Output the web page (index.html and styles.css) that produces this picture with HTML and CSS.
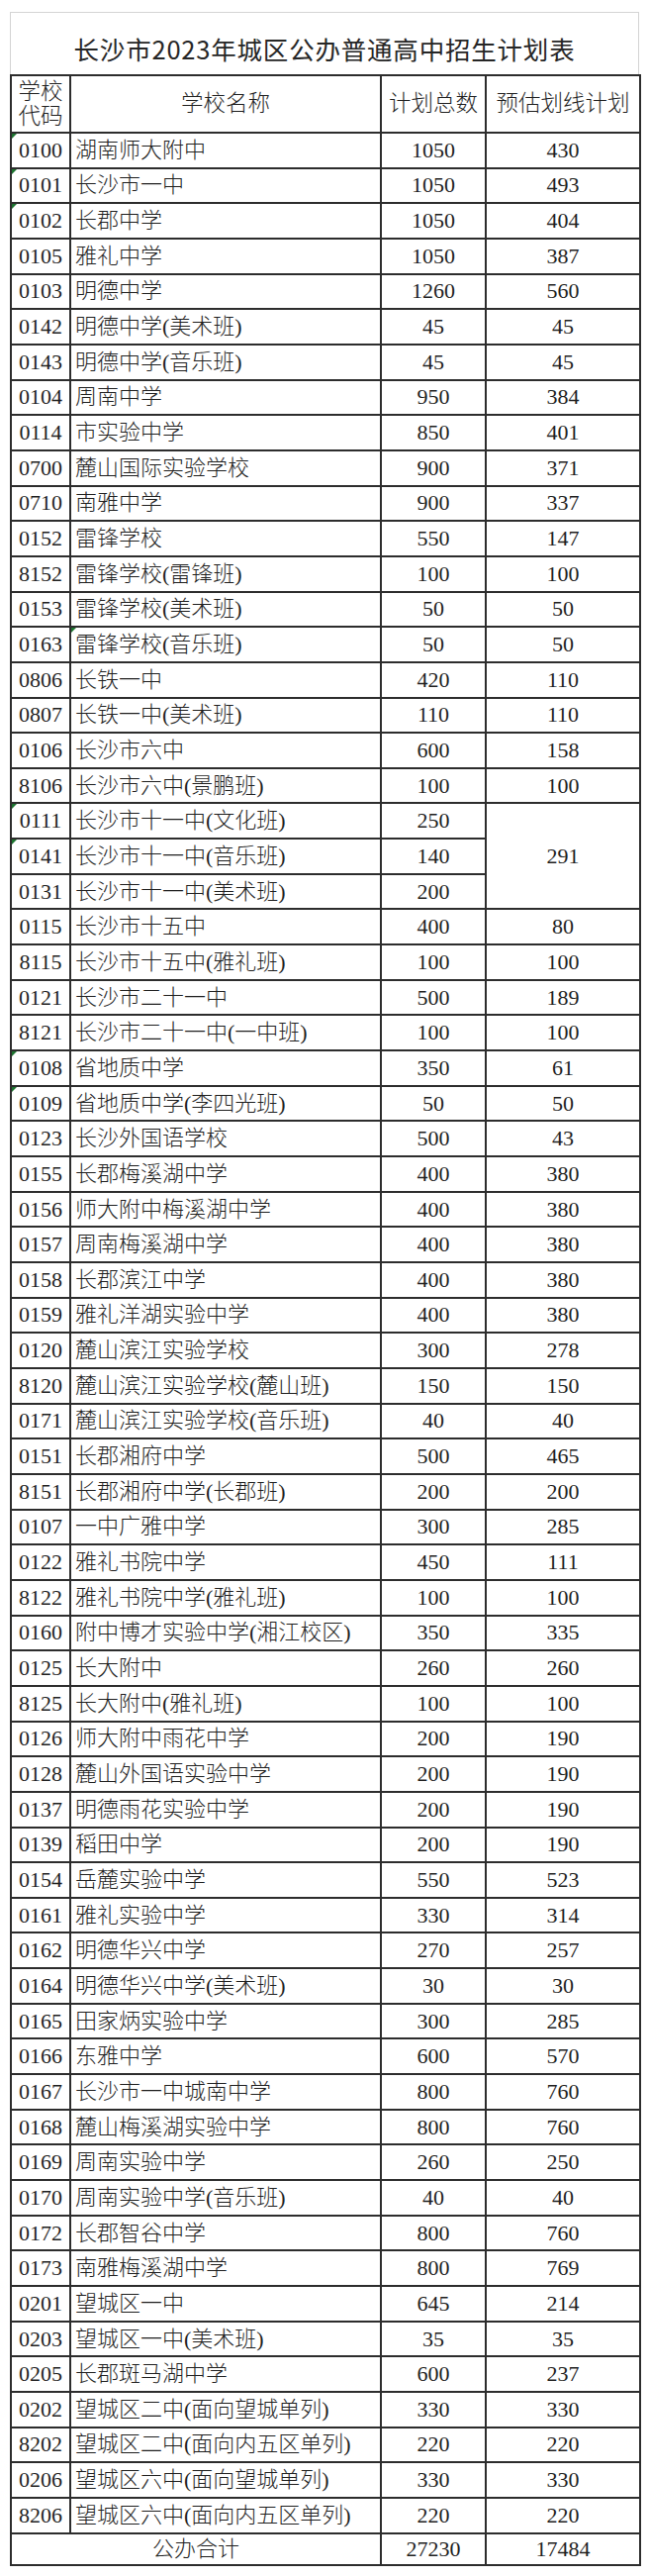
FILE: index.html
```html
<!DOCTYPE html>
<html lang="zh-CN">
<head>
<meta charset="utf-8">
<title>长沙市2023年城区公办普通高中招生计划表</title>
<link rel="stylesheet" href="styles.css">
</head>
<body>
<div class="sheet">
  <div class="title">长沙市2023年城区公办普通高中招生计划表</div>
  <table class="plan">
    <colgroup>
      <col class="c-code"><col class="c-name"><col class="c-total"><col class="c-est">
    </colgroup>
    <thead>
      <tr class="head">
        <th class="code-h">学校<br>代码</th>
        <th>学校名称</th>
        <th>计划总数</th>
        <th>预估划线计划</th>
      </tr>
    </thead>
    <tbody>
      <tr><td class="code mk">0100</td><td class="name">湖南师大附中</td><td class="num">1050</td><td class="num">430</td></tr>
      <tr><td class="code mk">0101</td><td class="name">长沙市一中</td><td class="num">1050</td><td class="num">493</td></tr>
      <tr><td class="code mk">0102</td><td class="name">长郡中学</td><td class="num">1050</td><td class="num">404</td></tr>
      <tr><td class="code">0105</td><td class="name">雅礼中学</td><td class="num">1050</td><td class="num">387</td></tr>
      <tr><td class="code">0103</td><td class="name">明德中学</td><td class="num">1260</td><td class="num">560</td></tr>
      <tr><td class="code">0142</td><td class="name">明德中学(美术班)</td><td class="num">45</td><td class="num">45</td></tr>
      <tr><td class="code">0143</td><td class="name">明德中学(音乐班)</td><td class="num">45</td><td class="num">45</td></tr>
      <tr><td class="code">0104</td><td class="name">周南中学</td><td class="num">950</td><td class="num">384</td></tr>
      <tr><td class="code">0114</td><td class="name">市实验中学</td><td class="num">850</td><td class="num">401</td></tr>
      <tr><td class="code">0700</td><td class="name">麓山国际实验学校</td><td class="num">900</td><td class="num">371</td></tr>
      <tr><td class="code">0710</td><td class="name">南雅中学</td><td class="num">900</td><td class="num">337</td></tr>
      <tr><td class="code">0152</td><td class="name">雷锋学校</td><td class="num">550</td><td class="num">147</td></tr>
      <tr><td class="code">8152</td><td class="name">雷锋学校(雷锋班)</td><td class="num">100</td><td class="num">100</td></tr>
      <tr><td class="code">0153</td><td class="name">雷锋学校(美术班)</td><td class="num">50</td><td class="num">50</td></tr>
      <tr><td class="code">0163</td><td class="name mk">雷锋学校(音乐班)</td><td class="num">50</td><td class="num">50</td></tr>
      <tr><td class="code">0806</td><td class="name">长铁一中</td><td class="num">420</td><td class="num">110</td></tr>
      <tr><td class="code">0807</td><td class="name">长铁一中(美术班)</td><td class="num">110</td><td class="num">110</td></tr>
      <tr><td class="code">0106</td><td class="name">长沙市六中</td><td class="num">600</td><td class="num">158</td></tr>
      <tr><td class="code">8106</td><td class="name">长沙市六中(景鹏班)</td><td class="num">100</td><td class="num">100</td></tr>
      <tr><td class="code mk">0111</td><td class="name">长沙市十一中(文化班)</td><td class="num">250</td><td class="num" rowspan="3">291</td></tr>
      <tr><td class="code mk">0141</td><td class="name">长沙市十一中(音乐班)</td><td class="num">140</td></tr>
      <tr><td class="code">0131</td><td class="name">长沙市十一中(美术班)</td><td class="num">200</td></tr>
      <tr><td class="code">0115</td><td class="name">长沙市十五中</td><td class="num">400</td><td class="num">80</td></tr>
      <tr><td class="code">8115</td><td class="name">长沙市十五中(雅礼班)</td><td class="num">100</td><td class="num">100</td></tr>
      <tr><td class="code">0121</td><td class="name">长沙市二十一中</td><td class="num">500</td><td class="num">189</td></tr>
      <tr><td class="code">8121</td><td class="name">长沙市二十一中(一中班)</td><td class="num">100</td><td class="num">100</td></tr>
      <tr><td class="code mk">0108</td><td class="name">省地质中学</td><td class="num">350</td><td class="num">61</td></tr>
      <tr><td class="code mk">0109</td><td class="name">省地质中学(李四光班)</td><td class="num">50</td><td class="num">50</td></tr>
      <tr><td class="code">0123</td><td class="name">长沙外国语学校</td><td class="num">500</td><td class="num">43</td></tr>
      <tr><td class="code">0155</td><td class="name">长郡梅溪湖中学</td><td class="num">400</td><td class="num">380</td></tr>
      <tr><td class="code">0156</td><td class="name">师大附中梅溪湖中学</td><td class="num">400</td><td class="num">380</td></tr>
      <tr><td class="code">0157</td><td class="name">周南梅溪湖中学</td><td class="num">400</td><td class="num">380</td></tr>
      <tr><td class="code">0158</td><td class="name">长郡滨江中学</td><td class="num">400</td><td class="num">380</td></tr>
      <tr><td class="code">0159</td><td class="name">雅礼洋湖实验中学</td><td class="num">400</td><td class="num">380</td></tr>
      <tr><td class="code">0120</td><td class="name">麓山滨江实验学校</td><td class="num">300</td><td class="num">278</td></tr>
      <tr><td class="code">8120</td><td class="name">麓山滨江实验学校(麓山班)</td><td class="num">150</td><td class="num">150</td></tr>
      <tr><td class="code">0171</td><td class="name">麓山滨江实验学校(音乐班)</td><td class="num">40</td><td class="num">40</td></tr>
      <tr><td class="code">0151</td><td class="name">长郡湘府中学</td><td class="num">500</td><td class="num">465</td></tr>
      <tr><td class="code">8151</td><td class="name">长郡湘府中学(长郡班)</td><td class="num">200</td><td class="num">200</td></tr>
      <tr><td class="code">0107</td><td class="name">一中广雅中学</td><td class="num">300</td><td class="num">285</td></tr>
      <tr><td class="code">0122</td><td class="name">雅礼书院中学</td><td class="num">450</td><td class="num">111</td></tr>
      <tr><td class="code">8122</td><td class="name">雅礼书院中学(雅礼班)</td><td class="num">100</td><td class="num">100</td></tr>
      <tr><td class="code">0160</td><td class="name">附中博才实验中学(湘江校区)</td><td class="num">350</td><td class="num">335</td></tr>
      <tr><td class="code">0125</td><td class="name">长大附中</td><td class="num">260</td><td class="num">260</td></tr>
      <tr><td class="code">8125</td><td class="name">长大附中(雅礼班)</td><td class="num">100</td><td class="num">100</td></tr>
      <tr><td class="code">0126</td><td class="name">师大附中雨花中学</td><td class="num">200</td><td class="num">190</td></tr>
      <tr><td class="code">0128</td><td class="name">麓山外国语实验中学</td><td class="num">200</td><td class="num">190</td></tr>
      <tr><td class="code">0137</td><td class="name">明德雨花实验中学</td><td class="num">200</td><td class="num">190</td></tr>
      <tr><td class="code">0139</td><td class="name">稻田中学</td><td class="num">200</td><td class="num">190</td></tr>
      <tr><td class="code">0154</td><td class="name">岳麓实验中学</td><td class="num">550</td><td class="num">523</td></tr>
      <tr><td class="code">0161</td><td class="name">雅礼实验中学</td><td class="num">330</td><td class="num">314</td></tr>
      <tr><td class="code">0162</td><td class="name">明德华兴中学</td><td class="num">270</td><td class="num">257</td></tr>
      <tr><td class="code">0164</td><td class="name">明德华兴中学(美术班)</td><td class="num">30</td><td class="num">30</td></tr>
      <tr><td class="code">0165</td><td class="name">田家炳实验中学</td><td class="num">300</td><td class="num">285</td></tr>
      <tr><td class="code">0166</td><td class="name">东雅中学</td><td class="num">600</td><td class="num">570</td></tr>
      <tr><td class="code">0167</td><td class="name">长沙市一中城南中学</td><td class="num">800</td><td class="num">760</td></tr>
      <tr><td class="code">0168</td><td class="name">麓山梅溪湖实验中学</td><td class="num">800</td><td class="num">760</td></tr>
      <tr><td class="code">0169</td><td class="name">周南实验中学</td><td class="num">260</td><td class="num">250</td></tr>
      <tr><td class="code">0170</td><td class="name">周南实验中学(音乐班)</td><td class="num">40</td><td class="num">40</td></tr>
      <tr><td class="code">0172</td><td class="name">长郡智谷中学</td><td class="num">800</td><td class="num">760</td></tr>
      <tr><td class="code">0173</td><td class="name">南雅梅溪湖中学</td><td class="num">800</td><td class="num">769</td></tr>
      <tr><td class="code">0201</td><td class="name">望城区一中</td><td class="num">645</td><td class="num">214</td></tr>
      <tr><td class="code">0203</td><td class="name">望城区一中(美术班)</td><td class="num">35</td><td class="num">35</td></tr>
      <tr><td class="code">0205</td><td class="name">长郡斑马湖中学</td><td class="num">600</td><td class="num">237</td></tr>
      <tr><td class="code">0202</td><td class="name">望城区二中(面向望城单列)</td><td class="num">330</td><td class="num">330</td></tr>
      <tr><td class="code">8202</td><td class="name">望城区二中(面向内五区单列)</td><td class="num">220</td><td class="num">220</td></tr>
      <tr><td class="code">0206</td><td class="name">望城区六中(面向望城单列)</td><td class="num">330</td><td class="num">330</td></tr>
      <tr><td class="code">8206</td><td class="name">望城区六中(面向内五区单列)</td><td class="num">220</td><td class="num">220</td></tr>
    </tbody>
    <tfoot>
      <tr class="sum"><td colspan="2" class="sum-label">公办合计</td><td class="num">27230</td><td class="num">17484</td></tr>
    </tfoot>
  </table>
</div>
</body>
</html>
```

FILE: styles.css
```css
html, body {
  margin: 0;
  padding: 0;
  background: #ffffff;
}

.sheet {
  width: 636px;
  margin: 12px 0 0 10px;
}

.title {
  height: 63px;
  border: 1px solid #d4d4d4;
  border-bottom: none;
  box-sizing: border-box;
  display: flex;
  align-items: center;
  justify-content: center;
  padding-top: 8px;
  font-family: "Noto Sans CJK SC", sans-serif;
  font-size: 25.5px;
  font-weight: 400;
  letter-spacing: 0.8px;
  color: #262626;
}

.plan {
  width: 636px;
  border-collapse: collapse;
  table-layout: fixed;
  font-family: "Liberation Serif", "Noto Sans CJK SC", serif;
  font-size: 22px;
  font-weight: 300;
  color: #1f1f1f;
}

.c-code { width: 60px; }
.c-name { width: 314px; }
.c-total { width: 106px; }
.c-est { width: 156px; }

.plan th,
.plan td {
  border: 2px solid #2d2d2d;
  padding: 0;
  line-height: 24px;
  vertical-align: middle;
  white-space: nowrap;
  overflow: hidden;
}

.plan tbody td {
  height: 33.66px;
}

.plan th {
  font-weight: 300;
  font-size: 22.5px;
  text-align: center;
  height: 56px;
}

.plan th.code-h {
  line-height: 25px;
}

.code {
  text-align: center;
}

.plan td.name {
  text-align: left;
  padding-left: 4px;
}

.num {
  text-align: center;
}

.plan tfoot td {
  height: 30.5px;
}

.sum-label {
  text-align: center;
}

.mk {
  position: relative;
}

.mk::before {
  content: "";
  position: absolute;
  left: 0;
  top: 0;
  width: 0;
  height: 0;
  border-top: 5px solid #1d7430;
  border-right: 5px solid transparent;
}
```
